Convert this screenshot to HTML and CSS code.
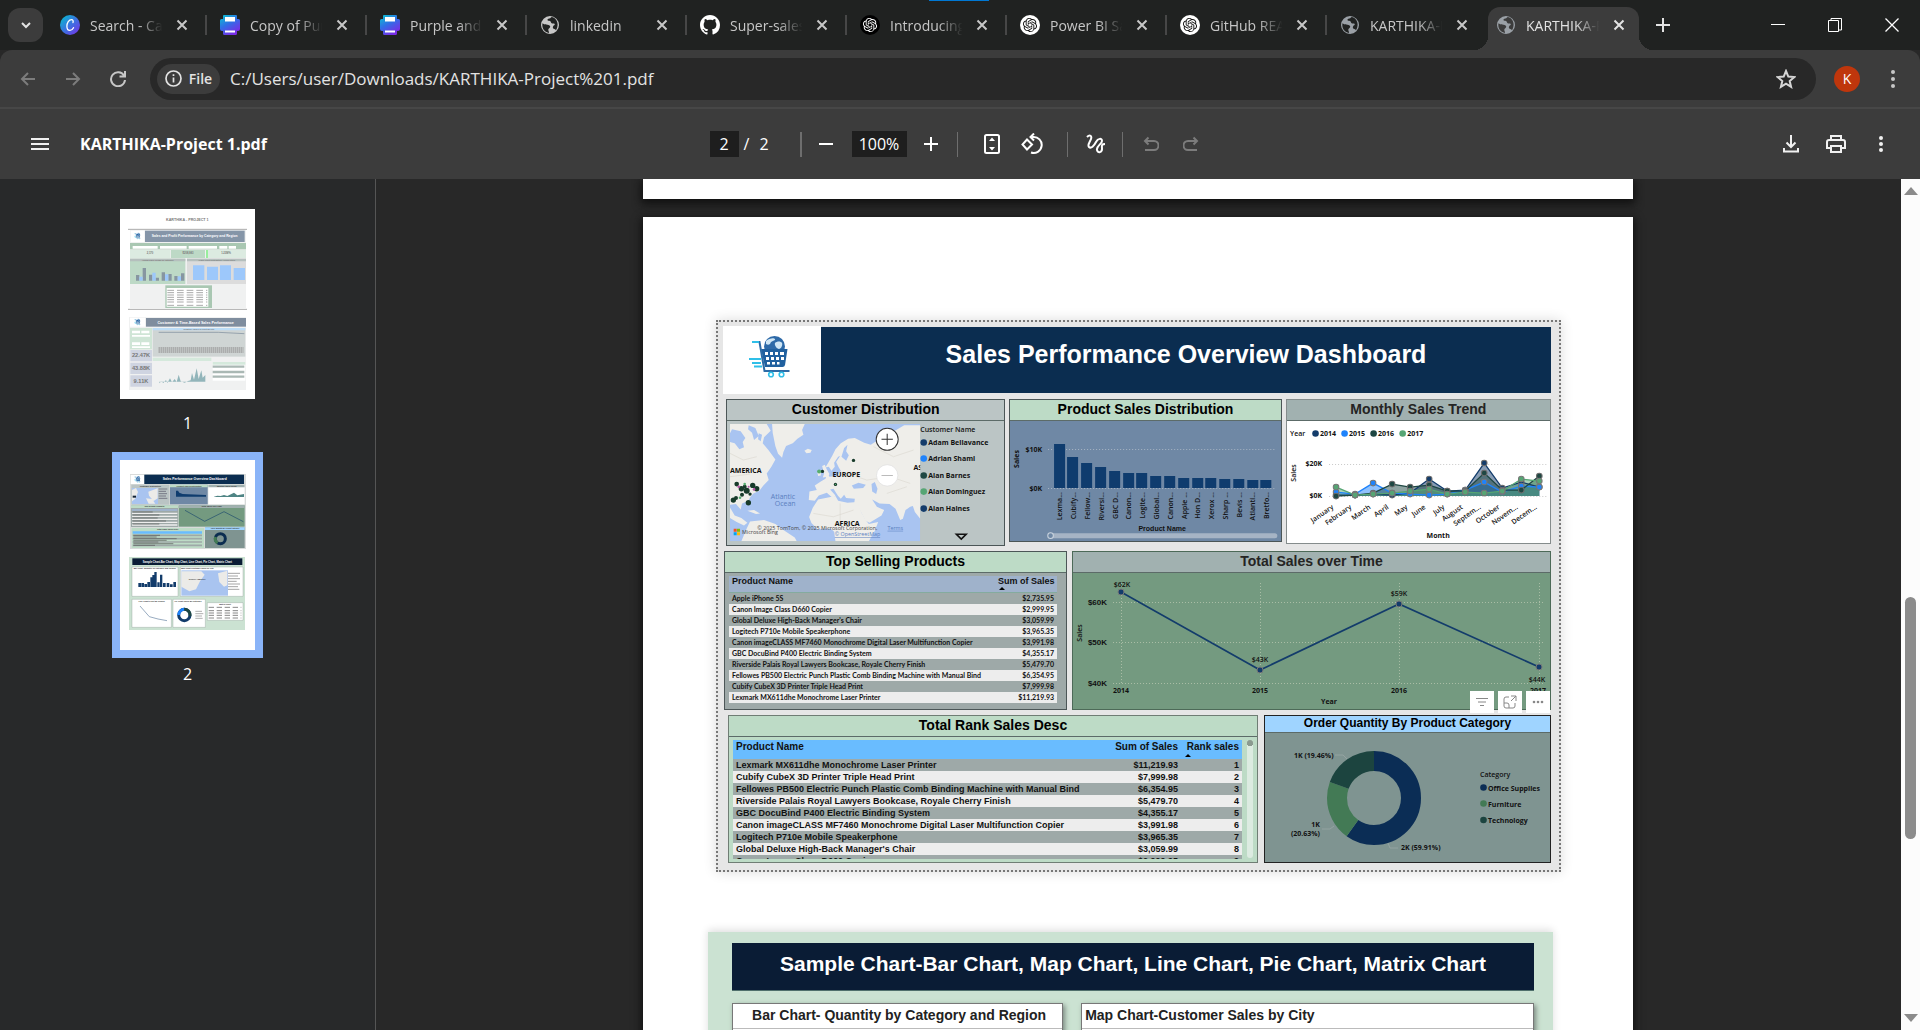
FILE: index.html
```html
<!DOCTYPE html>
<html lang="en">
<head>
<meta charset="utf-8">
<title>KARTHIKA-Project 1.pdf</title>
<link rel="stylesheet" href="styles.css">
</head>
<body>
<svg class="defs" width="0" height="0" aria-hidden="true">
  <defs>
    <linearGradient id="canva" x1="0" y1="0" x2="1" y2="1"><stop offset="0" stop-color="#00c4cc"/><stop offset=".5" stop-color="#3a73e0"/><stop offset="1" stop-color="#7d2ae8"/></linearGradient>
    <linearGradient id="print" x1="0" y1="0" x2=".6" y2="1"><stop offset="0" stop-color="#08c8cf"/><stop offset=".5" stop-color="#2f6fe6"/><stop offset="1" stop-color="#7a2be6"/></linearGradient>
    <symbol id="x" viewBox="0 0 16 16"><path d="M3.500 3.500l9 9M12.500 3.500l-9 9" stroke="currentColor" stroke-width="2" fill="none"/></symbol>
    <symbol id="i-canva" viewBox="0 0 20 20"><circle cx="10" cy="10" r="10" fill="url(#canva)"/><path d="M13 7.600c.5-1.600 0-3-1.500-3-2.500 0-4.600 3.400-4.600 6.600 0 2.600 1.300 4.200 3 4.200 1.500 0 2.800-1.100 3.600-2.700" fill="none" stroke="#fff" stroke-width="1.300" stroke-linecap="round"/></symbol>
    <symbol id="i-print" viewBox="0 0 20 20"><path d="M4 0h12a1 1 0 011 1v3h1.500A1.500 1.500 0 0120 5.500V14a2 2 0 01-2 2h-1v2.500a1.500 1.500 0 01-1.500 1.500h-11A1.500 1.500 0 013 18.500V16H2a2 2 0 01-2-2V5.500A1.500 1.500 0 011.500 4H3V1a1 1 0 011-1z" fill="url(#print)"/><path d="M5 2h10v4.500H5zM5 15.500h10v2H5z" fill="#fff"/></symbol>
    <symbol id="i-globe" viewBox="2 2 20 20"><path fill="currentColor" d="M12 3a9 9 0 100 18 9 9 0 000-18zm-1 16.900c-3.950-.49-6.700-3.800-6.700-7.900 0-.62.080-1.210.21-1.790 1.500 1.600 3.400.9 5 1.500 1.500.5 2.800.7 2.700 2.100-.1 1.400-1.700 1.500-1.900 2.700-.2 1.100.7 1.500.7 3.390zm6.900-2.700c-.7-.9-1.200-1.300-2.200-1.400-1.200-.2-.9-1.700-.4-2.700.4-.9 1.600-.7 1.500-1.800-.1-1-1.500-.6-2.600-.8-1.600-.2-1-2-2.200-2.500-1-.5-2.600 0-2.500-1.300.1-1.300 1.600-1 2.700-1.500.7-.3.900-.8 1.400-1.100 3.300.5 6 3.700 6 7.500 0 2.080-.5 4.200-1.700 5.600z"/></symbol>
    <symbol id="i-github" viewBox="0 0 16 16"><path fill="#fff" d="M8 0C3.580 0 0 3.580 0 8c0 3.540 2.290 6.530 5.470 7.590.4.070.55-.17.55-.38 0-.19-.01-.82-.01-1.490-2.010.37-2.530-.49-2.690-.94-.09-.23-.48-.94-.82-1.130-.28-.15-.68-.52-.01-.53.63-.01 1.080.58 1.230.82.72 1.210 1.870.87 2.330.66.070-.52.28-.87.510-1.070-1.780-.2-3.640-.89-3.640-3.950 0-.87.31-1.590.82-2.150-.08-.2-.36-1.020.08-2.120 0 0 .67-.21 2.200.82.640-.18 1.320-.27 2-.27s1.360.09 2 .27c1.530-1.040 2.200-.82 2.200-.82.440 1.100.16 1.920.08 2.120.51.56.82 1.270.82 2.150 0 3.070-1.870 3.750-3.650 3.950.29.25.54.73.54 1.480 0 1.070-.01 1.930-.01 2.200 0 .21.15.46.55.38A8.010 8.010 0 0016 8c0-4.420-3.580-8-8-8z"/></symbol>
    <path id="knot" d="M22.2819 9.8211a5.9847 5.9847 0 0 0-.5157-4.9108 6.0462 6.0462 0 0 0-6.5098-2.9A6.0651 6.0651 0 0 0 4.9807 4.1818a5.9847 5.9847 0 0 0-3.9977 2.9 6.0462 6.0462 0 0 0 .7427 7.0966 5.98 5.98 0 0 0 .511 4.9107 6.051 6.051 0 0 0 6.5146 2.9001A5.9847 5.9847 0 0 0 13.2599 24a6.0557 6.0557 0 0 0 5.7718-4.2058 5.9894 5.9894 0 0 0 3.9977-2.9001 6.0557 6.0557 0 0 0-.7475-7.0729zm-9.022 12.6081a4.4755 4.4755 0 0 1-2.8764-1.0408l.1419-.0804 4.7783-2.7582a.7948.7948 0 0 0 .3927-.6813v-6.7369l2.02 1.1686a.071.071 0 0 1 .038.052v5.5826a4.504 4.504 0 0 1-4.4945 4.4944zm-9.6607-4.1254a4.4708 4.4708 0 0 1-.5346-3.0137l.142.0852 4.783 2.7582a.7712.7712 0 0 0 .7806 0l5.8428-3.3685v2.3324a.0804.0804 0 0 1-.0332.0615L9.74 19.9502a4.4992 4.4992 0 0 1-6.1408-1.6464zM2.3408 7.8956a4.485 4.485 0 0 1 2.3655-1.9728V11.6a.7664.7664 0 0 0 .3879.6765l5.8144 3.3543-2.0201 1.1685a.0757.0757 0 0 1-.071 0l-4.8303-2.7865A4.504 4.504 0 0 1 2.3408 7.872zm16.5963 3.8558L13.1038 8.364 15.1192 7.2a.0757.0757 0 0 1 .071 0l4.8303 2.7913a4.4944 4.4944 0 0 1-.6765 8.1042v-5.6772a.79.79 0 0 0-.407-.667zm2.0107-3.0231l-.142-.0852-4.7735-2.7818a.7759.7759 0 0 0-.7854 0L9.409 9.2297V6.8974a.0662.0662 0 0 1 .0284-.0615l4.8303-2.7866a4.4992 4.4992 0 0 1 6.6802 4.66zM8.3065 12.863l-2.02-1.1638a.0804.0804 0 0 1-.038-.0567V6.0742a4.4992 4.4992 0 0 1 7.3757-3.4537l-.142.0805L8.704 5.459a.7948.7948 0 0 0-.3927.6813zm1.0976-2.3654l2.602-1.4998 2.6069 1.4998v2.9994l-2.5974 1.4997-2.6067-1.4997Z"/>
    <symbol id="i-ai-dark" viewBox="-5 -5 34 34"><circle cx="12" cy="12" r="17" fill="#000"/><use href="#knot" fill="#fff"/></symbol>
    <symbol id="i-ai" viewBox="-5 -5 34 34"><circle cx="12" cy="12" r="17" fill="#fff"/><use href="#knot" fill="#111"/></symbol>
    <symbol id="cart" viewBox="0 0 42 44">
      <circle cx="26.500" cy="11.500" r="10.500" fill="#2e6aa8"/><path d="M18 6c3-3 8-3.500 9-2s-4 2-4.500 4-3 2-4.500 1zM27 8c2-2 6-2 7 0s-1 6-3 6-5-4-4-6z" fill="#cfe6f5"/>
      <path d="M13 14h26.500L37 30q-.5 2-2.500 2H17z" fill="#20609f"/>
      <path d="M17 17h3v3h-3zM22 17h3v3h-3zM27 17h3v3h-3zM32 17h4v3h-4zM18 22h3v3h-3zM23 22h3v3h-3zM28 22h3v3h-3zM33 22h3v3h-3zM19 27h3v2.500h-3zM24 27h3v2.500h-3zM29 27h2.500v2.500H29z" fill="#fff"/>
      <path d="M4 7h7.500l5 29h25" fill="none" stroke="#2d6ba6" stroke-width="2"/><path d="M4 7h7M1 24h12M4 28h9M6 31.500h8" stroke="#2fbfe8" stroke-width="2"/>
      <circle cx="23" cy="39.500" r="2.300" fill="none" stroke="#2fbfe8" stroke-width="1.600"/><circle cx="33.500" cy="39.500" r="2.300" fill="none" stroke="#2fbfe8" stroke-width="1.600"/>
    </symbol>
  </defs>
</svg>

<header class="tabstrip">
  <span class="drag-mark"></span>
  <button class="tab-search" aria-label="Search tabs"><svg width="12" height="12" viewBox="0 0 12 12"><path d="M2 4l4 4 4-4" fill="none" stroke="currentColor" stroke-width="2"/></svg></button>
  <nav class="tabs" aria-label="Open tabs">
    <div class="tab"><svg class="fav"><use href="#i-canva"/></svg><a href="#">Search - Canva</a><button aria-label="Close tab"><svg><use href="#x"/></svg></button></div>
    <div class="tab"><svg class="fav"><use href="#i-print"/></svg><a href="#">Copy of Purple</a><button aria-label="Close tab"><svg><use href="#x"/></svg></button></div>
    <div class="tab"><svg class="fav"><use href="#i-print"/></svg><a href="#">Purple and White</a><button aria-label="Close tab"><svg><use href="#x"/></svg></button></div>
    <div class="tab"><svg class="fav"><use href="#i-globe"/></svg><a href="#">linkedin</a><button aria-label="Close tab"><svg><use href="#x"/></svg></button></div>
    <div class="tab"><svg class="fav"><use href="#i-github"/></svg><a href="#">Super-sales</a><button aria-label="Close tab"><svg><use href="#x"/></svg></button></div>
    <div class="tab"><svg class="fav"><use href="#i-ai-dark"/></svg><a href="#">Introducing</a><button aria-label="Close tab"><svg><use href="#x"/></svg></button></div>
    <div class="tab"><svg class="fav"><use href="#i-ai"/></svg><a href="#">Power BI Sales</a><button aria-label="Close tab"><svg><use href="#x"/></svg></button></div>
    <div class="tab"><svg class="fav"><use href="#i-ai"/></svg><a href="#">GitHub README</a><button aria-label="Close tab"><svg><use href="#x"/></svg></button></div>
    <div class="tab last"><svg class="fav grey"><use href="#i-globe"/></svg><a href="#">KARTHIKA-Project</a><button aria-label="Close tab"><svg><use href="#x"/></svg></button></div>
    <div class="tab active"><svg class="fav grey"><use href="#i-globe"/></svg><a href="#">KARTHIKA-Project</a><button aria-label="Close tab"><svg><use href="#x"/></svg></button></div>
    <button class="new-tab" aria-label="New tab"><svg width="14" height="14" viewBox="0 0 14 14"><path d="M7 0v14M0 7h14" stroke="currentColor" stroke-width="2"/></svg></button>
  </nav>
  <div class="window-buttons">
    <button aria-label="Minimize"><svg width="14" height="14" viewBox="0 0 14 14"><path d="M0 6.500h14" stroke="currentColor"/></svg></button>
    <button aria-label="Restore"><svg width="14" height="14" viewBox="0 0 14 14"><path d="M.5 2.500h10v11H.5zM3 2.500V.5h10.500V12h-3" fill="none" stroke="currentColor"/></svg></button>
    <button aria-label="Close"><svg width="14" height="14" viewBox="0 0 14 14"><path d="M.5.5l13 13M13.500.5l-13 13" stroke="currentColor" stroke-width="1.300"/></svg></button>
  </div>
</header>

<div class="navbar">
  <button class="nav dim" aria-label="Back"><svg width="16" height="16" viewBox="0 0 16 16"><path d="M15 8H2M8 2L2 8l6 6"/></svg></button>
  <button class="nav dim" aria-label="Forward"><svg width="16" height="16" viewBox="0 0 16 16"><path d="M1 8h13M8 2l6 6-6 6"/></svg></button>
  <button class="nav" aria-label="Reload"><svg width="16" height="16" viewBox="0 0 16 16"><path d="M14 4.500A7 7 0 1015 9M15 0v5.500H9.500" /></svg></button>
  <div class="omnibox">
    <button class="chip"><svg width="17" height="17" viewBox="0 0 17 17"><circle cx="8.500" cy="8.500" r="7.500" fill="none" stroke="currentColor" stroke-width="1.700"/><path d="M8.500 7.500v5M8.500 4.300v1.800" stroke="currentColor" stroke-width="1.700"/></svg>File</button>
    <input class="url" aria-label="Address" value="C:/Users/user/Downloads/KARTHIKA-Project%201.pdf">
    <button class="nav star" aria-label="Bookmark"><svg width="20" height="20" viewBox="0 0 20 20"><path d="M10 2l2.300 5.600 6 .5-4.600 3.900 1.400 5.900-5.100-3.200-5.100 3.200 1.400-5.900L1.700 8.100l6-.5z"/></svg></button>
  </div>
  <button class="avatar" aria-label="Profile">K</button>
  <button class="nav menu" aria-label="Menu"><svg width="6" height="20" viewBox="0 0 6 20"><g fill="currentColor" stroke="none"><circle cx="3" cy="3" r="2"/><circle cx="3" cy="10" r="2"/><circle cx="3" cy="17" r="2"/></g></svg></button>
</div>

<div class="pdfbar">
  <div class="pdf-left">
    <button aria-label="Toggle sidebar"><svg width="18" height="14" viewBox="0 0 18 14"><path d="M0 2h18M0 7h18M0 12h18"/></svg></button>
    <h1>KARTHIKA-Project 1.pdf</h1>
  </div>
  <div class="pdf-mid">
    <input class="pageno" aria-label="Page" value="2"><span class="of">/</span><span class="total">2</span>
    <i class="sep"></i>
    <button aria-label="Zoom out"><svg width="14" height="14" viewBox="0 0 14 14"><path d="M0 7h14"/></svg></button>
    <input class="zoom" aria-label="Zoom" value="100%">
    <button aria-label="Zoom in"><svg width="14" height="14" viewBox="0 0 14 14"><path d="M0 7h14M7 0v14"/></svg></button>
    <i class="sep thin"></i>
    <button class="fit" aria-label="Fit to page"><svg width="16" height="20" viewBox="0 0 16 20"><rect x="1" y="1" width="14" height="18" rx="1.500"/><path d="M8 3.500L11 7H5zM8 16.500L11 13H5z" fill="currentColor" stroke="none"/></svg></button>
    <button aria-label="Rotate"><svg width="22" height="22" viewBox="0 0 22 22"><path d="M6 6.500L11 11.500 6 16.500 1.500 11.500zM10 4h2a8 8 0 11-2 15.500M13 .5L9.500 4 13 7.500"/></svg></button>
    <i class="sep thin wide"></i>
    <button aria-label="Annotate"><svg width="20" height="20" viewBox="0 0 20 20"><path d="M1 3c3-3 5-1 4 2S1 11 3 13s5-1 7-5 6-4 6-1-6 5-5 9 5 2 5-1-1-5 3-5"/></svg></button>
    <i class="sep thin"></i>
    <button class="dim" aria-label="Undo"><svg width="16" height="16" viewBox="0 0 16 16"><path d="M2 14h9a4 4 0 000-9H2M5.500 1.500L2 5l3.500 3.500"/></svg></button>
    <button class="dim" aria-label="Redo"><svg width="16" height="16" viewBox="0 0 16 16"><path d="M14 14H5a4 4 0 010-9h9M10.500 1.500L14 5l-3.500 3.500"/></svg></button>
  </div>
  <div class="pdf-right">
    <button aria-label="Download"><svg width="16" height="18" viewBox="0 0 16 18"><path d="M8 0v12M3.500 7.500L8 12l4.500-4.500M1 13v3.500h14V13"/></svg></button>
    <button aria-label="Print"><svg width="20" height="18" viewBox="0 0 20 18"><path d="M5 5V1h10v4M5 13H1V7q0-2 2-2h14q2 0 2 2v6h-4M5 11h10v6H5z"/></svg></button>
    <button aria-label="More"><svg width="6" height="16" viewBox="0 0 6 16"><g fill="currentColor" stroke="none"><circle cx="3" cy="2" r="2"/><circle cx="3" cy="8" r="2"/><circle cx="3" cy="14" r="2"/></g></svg></button>
  </div>
</div>

<main class="viewer">
  <aside class="thumbs">
    <a class="thumb" href="#p1"><svg viewBox="90 57 405 570">
      <rect x="90" y="57" width="405" height="570" fill="#fff"/>
      <g class="mini">
      <text x="292" y="93" font-size="11">KARTHIKA - PROJECT 1</text>
      <path d="M114 118H471M114 358H471" stroke="#aaa" stroke-width="3"/><path d="M120 120h348v236H120zM117 381h351v219H117z" fill="#f0f1f1"/>
      <rect x="122" y="122" width="41" height="34" fill="#fff"/><use href="#cart" x="132" y="127" width="20" height="22"/><rect x="165" y="122" width="299" height="34" fill="#8595a8"/><text x="314" y="141" font-size="10" fill="#fff">Sales and Profit Performance by Category and Region</text>
      <rect x="120" y="159" width="348" height="19" fill="#a9c7b2"/><path d="M128 168h75v8h-75zM210 168h80v8h-80zM296 168h85v8h-85zM388 168h24v8h-24zM416 168h22v8h-22z" fill="#fff"/>
      <rect x="120" y="180" width="121" height="24" fill="#dcebe1"/><rect x="243" y="180" width="102" height="24" fill="#bdd9c6"/><rect x="348" y="180" width="120" height="24" fill="#dcebe1"/><path d="M348 180h6v24h-6z" fill="#98ee9d"/><text x="180" y="192" font-size="8">2,170</text><text x="294" y="192" font-size="8">$208,983</text><text x="408" y="192" font-size="8">1.23M%</text>
      <rect x="120" y="206" width="166" height="76" fill="#bdd9c6"/><rect x="291" y="206" width="177" height="76" fill="#dcdcdc"/><path d="M120 206h166v8H120zM291 206h177v8H291z" fill="#b5bfbd"/><text x="203" y="213" font-size="6">Annual Sales Trends by Category</text><text x="380" y="213" font-size="6">Yearly Profit Distribution Across Cities</text>
      <path d="M138 255h10v17h-10zM158 234h10v38h-10zM177 254h10v18h-10zM197 263h10v9h-10zM215 247h10v25h-10zM235 252h10v20h-10zM253 258h10v14h-10zM273 250h10v22h-10z" fill="#8796a1"/><path d="M148 260h10v12h-10zM187 248h10v24h-10zM225 253h10v19h-10zM263 259h10v13h-10zM309 226h34v44h-34zM351 230h33v40h-33zM390 226h33v44h-33zM431 234h34v36h-34z" fill="#9dc8fb"/>
      <rect x="226" y="286" width="140" height="68" fill="#a9c7b2"/><path d="M230 294h125v56H230z" fill="#fff"/><path d="M232 301h120M232 308h120M232 315h120M232 322h120M232 329h120M232 336h120M232 346h120" stroke="#aaa" stroke-width="3" stroke-dasharray="20 9"/>
      <rect x="120" y="383" width="45" height="27" fill="#fff"/><use href="#cart" x="132" y="385" width="20" height="22"/><rect x="168" y="384" width="300" height="26" fill="#7f8d9e"/><text x="317" y="402" font-size="11" fill="#fff">Customer &amp; Time-Based Sales Performance</text>
      <rect x="120" y="414" width="66" height="64" fill="#cfe5d6"/><path d="M126 422h24v8h-24zM154 422h24v8h-24zM126 435h54v5h-54zM126 457h24v8h-24zM154 457h24v8h-24zM126 469h54v5h-54z" fill="#fff"/>
      <rect x="188" y="414" width="278" height="86" fill="#cfd5d4"/><path d="M188 414h278v7H188z" fill="#bcdcf6"/><path d="M206 427h180l77 4" stroke="#79899a" fill="none" stroke-width="2"/><path d="M206 480h254" stroke="#999" stroke-width="18" stroke-dasharray="3 3"/><text x="327" y="420" font-size="6">Negative Values in Profit By City</text>
      <path d="M121 480h65v34h-65zM121 518h65v34h-65zM121 556h65v34h-65z" fill="#cfd4e1"/><text x="153" y="502" font-size="17">22.47K</text><text x="153" y="540" font-size="17">43.88K</text><text x="153" y="579" font-size="17">9.11K</text>
      <rect x="188" y="503" width="176" height="10" fill="#d5e9dc"/><path d="M208 580l6-6 6 5 8-9 4 9 8-14 6 12 8-10 6 9 6-22 6 20 12 4 10-5 8-2 4-22 6 20 8-34 6 32 8-26 4 22 8-8v20H208z" fill="#92b5ba"/>
      <rect x="368" y="516" width="98" height="56" fill="#fff"/><path d="M368 516h98v8h-98z" fill="#d5e9dc"/><path d="M368 530h95M368 546h95M368 560h95" stroke="#aab8b4" stroke-width="7"/>
      </g>
    </svg><span>1</span></a>
    <a class="thumb current" href="#p2"><svg viewBox="90 810 405 570">
      <rect x="90" y="810" width="405" height="570" fill="#fff"/>
      <g class="mini dark">
      <rect x="120" y="852" width="348" height="225" fill="#d8dbda"/><rect x="122" y="855" width="40" height="27" fill="#fff"/><use href="#cart" x="132" y="857" width="20" height="22"/><rect x="163" y="854" width="299" height="28" fill="#0b2d50"/><text x="314" y="870" font-size="10" fill="#fff">Sales Performance Overview Dashboard</text>
      <rect x="124" y="884" width="114" height="60" fill="#bac4c4"/><rect x="126" y="894" width="78" height="48" fill="#a9c4f0"/><path d="M126 900l12-6 6 12-8 20-10 8zM175 905l28-10v30l-12 8-14-16zM168 925l18 2 10 14h-20z" fill="#ecebe8"/><path d="M128 917h10v6h-10z" fill="#123"/><path d="M206 897h26M206 904h22M206 911h25M206 918h22M206 925h26" stroke="#556" stroke-width="2"/>
      <rect x="240" y="884" width="113" height="59" fill="#6f88a5"/><path d="M240 884h113v8H240z" fill="#bddbc6"/><path d="M258 902h6l4 6 10 4 70 3v5h-90z" fill="#0f3c6e"/><rect x="355" y="884" width="109" height="59" fill="#fff"/><path d="M355 884h109v8H355z" fill="#a1b1b0"/><path d="M372 920l10-3 10 1 10-3 10 3 20-10 10 8 20-4v9h-90z" fill="#4e8484"/>
      <text x="181" y="891" font-size="6">Customer Distribution</text><text x="297" y="891" font-size="6">Product Sales Distribution</text><text x="410" y="891" font-size="6">Monthly Sales Trend</text>
      <rect x="123" y="946" width="141" height="65" fill="#9ea9a8"/><path d="M123 946h141v8H123z" fill="#bddbc6"/><path d="M126 957h136v6H126z" fill="#9fb2cb"/><path d="M126 970h136M126 979h136M126 988h136M126 997h136M126 1005h136" stroke="#ededed" stroke-width="4"/><path d="M128 966h60M128 975h80M128 984h75M128 993h100M128 1002h80" stroke="#555" stroke-width="2"/><text x="193" y="952" font-size="6">Top Selling Products</text>
      <rect x="266" y="946" width="198" height="64" fill="#749a80"/><path d="M266 946h198v8H266z" fill="#a1b1b0"/><path d="M285 961l59 33 58-29 58 30" fill="none" stroke="#1c4a6d" stroke-width="2"/><text x="365" y="952" font-size="6">Total Sales over Time</text>
      <rect x="125" y="1014" width="217" height="60" fill="#bddbc6"/><path d="M128 1024h208v7H128z" fill="#69bcff"/><path d="M128 1036h208M128 1046h208M128 1056h208M128 1066h208" stroke="#9ea9a8" stroke-width="5"/><path d="M130 1036h80M130 1041h70M130 1046h130M130 1051h100M130 1056h75M130 1061h120M130 1066h65" stroke="#555" stroke-width="2"/><text x="233" y="1021" font-size="6">Total Rank Sales Desc</text>
      <rect x="345" y="1012" width="119" height="62" fill="#7f9491"/><path d="M345 1012h119v8H345z" fill="#9fd4ff"/><circle cx="391" cy="1046" r="15" fill="none" stroke="#0b2d50" stroke-width="9"/><path d="M383 1059a15 15 0 01-6-18" fill="none" stroke="#437a55" stroke-width="9"/><text x="405" y="1018" font-size="5">Order Quantity By Product Category</text>
      <rect x="117" y="1101" width="348" height="219" fill="#cbe2d2"/><rect x="127" y="1105" width="330" height="20" fill="#0a1c35"/><text x="292" y="1118" font-size="8" fill="#fff">Sample Chart-Bar Chart, Map Chart, Line Chart, Pie Chart, Matrix Chart</text>
      <path d="M126 1131h138v88H126zM271 1131h188v88H271zM126 1228h118v84H126zM249 1228h97v84h-97zM352 1238h107v53H352z" fill="#fff" stroke="#8a968e"/>
      <text x="194" y="1138" font-size="6">Bar Chart- Quantity by Category and Region</text><text x="322" y="1138" font-size="6">Map Chart-Customer Sales by City</text>
      <path d="M145 1179h8v12h-8zM154 1179h8v12h-8zM163 1182h8v9h-8zM172 1176h8v15h-8zM181 1162h6v29h-6zM187 1155h6v36h-6zM193 1146h7v45h-7zM202 1177h7v14h-7zM210 1154h7v37h-7zM219 1179h8v12h-8zM230 1179h8v12h-8zM240 1183h8v8h-8zM250 1176h8v15h-8z" fill="#133c6b"/>
      <rect x="274" y="1141" width="140" height="76" fill="#a9c4f0"/><path d="M274 1144h60l10 10-14 20-12 24-20 6-24-14zM384 1150l28-8v44l-10 4-14-14z" fill="#ecebe8"/><text x="322" y="1171" font-size="6">NORTH AMERICA</text><path d="M414 1150h36M414 1158h30M414 1166h36M414 1174h26M414 1182h36M414 1190h30M414 1198h34" stroke="#777" stroke-width="2"/>
      <path d="M150 1248l28 32 26 7 27 5" fill="none" stroke="#6480a0" stroke-width="2"/><circle cx="283" cy="1275" r="17" fill="none" stroke="#133c6b" stroke-width="9"/><path d="M283 1258a17 17 0 00-17 17" fill="none" stroke="#1f83fb" stroke-width="9"/><path d="M283 1258a17 17 0 0117 20" fill="none" stroke="#1e4743" stroke-width="9"/><path d="M316 1264h20M316 1271h24M316 1278h20M316 1285h22" stroke="#888" stroke-width="2"/>
      <text x="185" y="1236" font-size="6">Line Chart-Profit By Region</text><text x="294" y="1236" font-size="6">Pie Chart-Sales By Category</text><text x="405" y="1245" font-size="6">Matrix Chart</text><path d="M356 1252h98M356 1262h98M356 1269h98M356 1276h98M356 1284h98" stroke="#888" stroke-width="3" stroke-dasharray="16 8"/>
      </g>
    </svg><span>2</span></a>
  </aside>

  <div class="pages">
    <section class="sheet previous" id="p1"></section>
    <section class="sheet" id="p2">
      <div class="dash">
        <div class="dash-head"><div class="logo"><svg width="42" height="44"><use href="#cart"/></svg></div><h2>Sales Performance Overview Dashboard</h2></div>

        <div class="row three">
          <article class="panel map">
            <h3>Customer Distribution</h3>
            <svg class="chart" viewBox="727 421 277 124">
              <svg x="730" y="424" width="190" height="117" viewBox="90 372 570 351" overflow="hidden">
                <rect x="90" y="372" width="570" height="351" fill="#a9c4f1"/>
                <g fill="#efeeea">
                  <path d="M90 372H200L212 392 192 412 188 430 205 450 226 478 214 500 200 520 206 540 190 556 178 572 160 580 150 592 145 602 126 610 122 628 108 612 90 614Z"/>
                  <path d="M90 622L104 646 124 654 142 668 132 676 110 666 90 654Z"/>
                  <path d="M216 372h98l-8 18 4 14-18 12-14 14-20 8-8 18-4 17-12-12-8-22-8-40z"/><path d="M313 452l10-6 12 4-4 8-12 2z"/>
                  <path d="M366 498l8-4 6 14 8 14-4 8-16 2 4-12zM352 516l10-4v14l-8 2z"/>
                  <path d="M396 468l10-20 16-18 22-14 20-2 28 14 20 6 16-10 22-4 24-22 38-22h48v280l-16-20-6-18-8 2-14 10-8 26-8 4-14-34-18-14-30-2-22-12 14 22 22 10-8 16-36 22-12-6-24-46-10-4 2-16-26-2-6-10-10 12-8-8-14-22-10 2 16 18-8 8-18-16-24 8-12 16-18-2 2-26 22-4-6-14 18-12 14-8 6-16 6 10 22-2 12-16-6-10-8-16 12-18-6 2-12 18 2 12-10 12-8-12-10 2z"/>
                  <path d="M354 598l52-10 8 14 28 6 30-2 12 32 14 24 8 10 28-6-10 26-18 31H406l-4-28-10-10-40 2-18-18-7-18 11-28z"/>
                  <path d="M124 723L138 690 150 664 192 660 226 672 250 690 284 712 290 723Z"/><path d="M142 632l20-2 18 10-12 2z"/>
                </g>
                <path d="M96 388l26 6 14 20-8 12 4 16-14 6-14-18-14-4v-26zM146 376l20 8 10 24-14 12-6-22-12-10zM176 400l10 4-4 20-8-6z M455 556l20-8 22 6-8 10-28 2z M514 552l10-6 8 20-4 16-12-8z M424 470l8-26 10-10-4 20 8 12-8 16z" fill="#a9c4f1"/>
                <path d="M90 460l40 20 40-10M90 530l60-8M520 440l60 30 60-20M440 520l60 20 70-10 60 20M340 640l60 10 60-20M420 610v60M560 580l60-20" stroke="#dcd9d2" stroke-width="2" fill="none"/>
                <g fill="#173a2a"><circle cx="110" cy="552" r="7"/><circle cx="124" cy="566" r="8"/><circle cx="140" cy="572" r="9"/><circle cx="158" cy="556" r="8"/><circle cx="170" cy="566" r="8"/><circle cx="134" cy="560" r="6"/><circle cx="100" cy="600" r="8"/><circle cx="108" cy="594" r="6"/><circle cx="145" cy="608" r="8"/><circle cx="126" cy="584" r="6"/><circle cx="150" cy="582" r="5"/><circle cx="367" cy="514" r="5"/><circle cx="406" cy="553" r="5"/><circle cx="460" cy="481" r="5"/></g>
                <g fill="#56ad70"><circle cx="357" cy="514" r="6"/><circle cx="120" cy="593" r="4"/><circle cx="134" cy="552" r="4"/><circle cx="406" cy="553" r="2"/></g><g fill="#b457a3"><circle cx="116" cy="560" r="4"/><circle cx="162" cy="568" r="4"/><circle cx="146" cy="560" r="3"/></g>
                <g class="maplabel"><text x="90" y="519">AMERICA</text><text x="397" y="531">EUROPE</text><text x="404" y="678">AFRICA</text><text x="640" y="511">AS</text></g>
                <g class="sea"><text x="212" y="596">Atlantic</text><text x="224" y="619">Ocean</text></g>
                <path d="M101 686h9v9h-9z" fill="#f35325"/><path d="M111 686h9v9h-9z" fill="#81bc06"/><path d="M101 696h9v9h-9z" fill="#05a6f0"/><path d="M111 696h9v9h-9z" fill="#ffba08"/>
                <g class="credit"><text x="126" y="701">Microsoft Bing</text><text x="172" y="689">© 2025 TomTom, © 2025 Microsoft Corporation,</text><text x="562" y="689" class="lnk">Terms</text><text x="404" y="708" class="lnk">© OpenStreetMap</text></g>
                <circle cx="561" cy="418" r="33" fill="#fff" stroke="#333" stroke-width="3"/><path d="M544 418h34M561 401v34" stroke="#333" stroke-width="3"/><circle cx="561" cy="526" r="32" fill="#fff" stroke="#ddd" stroke-width="2"/><path d="M544 526h34" stroke="#bbb" stroke-width="3"/>
              </svg>
              <g class="legend"><text x="920" y="432" class="plain">Customer Name</text><text x="928" y="445">Adam Bellavance</text><text x="928" y="461">Adrian Shami</text><text x="928" y="478">Alan Barnes</text><text x="928" y="494">Alan Dominguez</text><text x="928" y="511">Alan Haines</text></g>
              <circle cx="923.500" cy="442.500" r="3.300" fill="#133c6b"/><circle cx="923.500" cy="458.500" r="3.300" fill="#1f83fb"/><circle cx="923.500" cy="475.500" r="3.300" fill="#1e4743"/><circle cx="923.500" cy="491.500" r="3.300" fill="#56a574"/><circle cx="923.500" cy="508.500" r="3.300" fill="#133c6b"/>
              <path d="M956 534h10l-5 5z" fill="none" stroke="#111" stroke-width="1.500"/>
            </svg>
          </article>

          <article class="panel bars">
            <h3>Product Sales Distribution</h3>
            <svg class="chart" viewBox="1011 421 270 120">
              <path d="M1049 449.500h228M1049 488.500h228" stroke="#a8b5c4" stroke-dasharray="1 2"/>
              <path fill="#0f3c6e" d="M1055 444h11v44h-11zM1068 457h11v31h-11zM1082 463h11v25h-11zM1096 467h11v21h-11zM1110 471h11v17h-11zM1124 473h11v15h-11zM1137 473h11v15h-11zM1151 476h11v12h-11zM1165 476h11v12h-11zM1179 478h11v10h-11zM1193 478h11v10h-11zM1206 478h11v10h-11zM1220 479h11v9h-11zM1234 479h11v9h-11zM1248 480h11v8h-11zM1261 480h11v8h-11z"/>
              <g class="axis end"><text x="1043" y="452">$10K</text><text x="1043" y="491">$0K</text></g>
              <g class="tick"><text transform="translate(1063 492) rotate(-90)">Lexma...</text><text transform="translate(1077 492) rotate(-90)">Cubify...</text><text transform="translate(1091 492) rotate(-90)">Fellow...</text><text transform="translate(1105 492) rotate(-90)">Riversi...</text><text transform="translate(1119 492) rotate(-90)">GBC D...</text><text transform="translate(1132 492) rotate(-90)">Canon...</text><text transform="translate(1146 492) rotate(-90)">Logite...</text><text transform="translate(1160 492) rotate(-90)">Global...</text><text transform="translate(1174 492) rotate(-90)">Canon...</text><text transform="translate(1188 492) rotate(-90)">Apple ...</text><text transform="translate(1201 492) rotate(-90)">Hon D...</text><text transform="translate(1215 492) rotate(-90)">Xerox ...</text><text transform="translate(1229 492) rotate(-90)">Sharp ...</text><text transform="translate(1243 492) rotate(-90)">Bevis ...</text><text transform="translate(1256 492) rotate(-90)">Atlanti...</text><text transform="translate(1270 492) rotate(-90)">Bretfo...</text></g>
              <text class="axis mid" transform="translate(1020 459) rotate(-90)">Sales</text><text class="axis mid arial" x="1163" y="531">Product Name</text>
              <rect x="1049" y="533" width="229" height="5" rx="2.500" fill="#a6b4c5"/><circle cx="1051.500" cy="535.500" r="2.800" fill="#6f88a5" stroke="#cbd5df"/>
            </svg>
          </article>

          <article class="panel trend">
            <h3>Monthly Sales Trend</h3>
            <svg class="chart" viewBox="1286 421 263 122">
              <g class="axis"><text x="1289" y="436" class="plain">Year</text><text x="1319" y="436">2014</text><text x="1348" y="436">2015</text><text x="1377" y="436">2016</text><text x="1406" y="436">2017</text></g>
              <circle cx="1314.500" cy="433.500" r="3.300" fill="#133c6b"/><circle cx="1343.500" cy="433.500" r="3.300" fill="#1f83fb"/><circle cx="1372.500" cy="433.500" r="3.300" fill="#1e4743"/><circle cx="1401.500" cy="433.500" r="3.300" fill="#56a574"/>
              <g class="axis end"><text x="1321" y="466">$20K</text><text x="1321" y="498">$0K</text></g>
              <path d="M1328 464.500h218M1328 496.500h218" stroke="#c9c9c9" stroke-dasharray="1 2"/>
              <g fill-opacity=".5">
                <path d="M1335 496l0-1 19 0 18-1 19 1 18-2 19-14 18 12 18-1 19-27 18 25 19-6 18 5v9z" fill="#133c6b"/><path d="M1335 496v-4l19 2 18-11 19 10 18 1 19 1 18-1 18-4 19-8 18 10 19-6 18 1v9z" fill="#1f83fb"/><path d="M1335 496l19-1 18-2 19-9 18 3 19-2 18 6h18l19-18 18 17h19l18-14v20z" fill="#1e4743"/><path d="M1335 496v-9l19 8 18-1 19-1 18-2 19-2 18 5 18-2 19 1 18-2 19-12 18 2v15z" fill="#56a574"/>
              </g>
              <g fill="none" stroke-width="1.300">
                <polyline class="s14" points="1335,495 1354,495 1372,494 1391,495 1409,493 1428,479 1446,491 1464,490 1483,463 1501,488 1520,482 1538,487"/><polyline class="s15" points="1335,492 1354,494 1372,483 1391,493 1409,494 1428,495 1446,494 1464,490 1483,482 1501,492 1520,486 1538,487"/><polyline class="s16" points="1335,496 1354,495 1372,493 1391,484 1409,487 1428,485 1446,491 1464,491 1483,473 1501,490 1520,490 1538,476"/><polyline class="s17" points="1335,487 1354,495 1372,494 1391,493 1409,491 1428,489 1446,494 1464,492 1483,493 1501,491 1520,479 1538,481"/>
              </g>
              <defs>
                <marker id="m14" markerUnits="userSpaceOnUse" markerWidth="8" markerHeight="8" refX="4" refY="4"><circle cx="4" cy="4" r="2.800" fill="#133c6b" stroke="#6b6b6b" stroke-width="1"/></marker>
                <marker id="m15" markerUnits="userSpaceOnUse" markerWidth="8" markerHeight="8" refX="4" refY="4"><circle cx="4" cy="4" r="2.800" fill="#1f83fb" stroke="#777" stroke-width="1"/></marker>
                <marker id="m16" markerUnits="userSpaceOnUse" markerWidth="8" markerHeight="8" refX="4" refY="4"><circle cx="4" cy="4" r="2.800" fill="#1e4743" stroke="#6b6b6b" stroke-width="1"/></marker>
                <marker id="m17" markerUnits="userSpaceOnUse" markerWidth="8" markerHeight="8" refX="4" refY="4"><circle cx="4" cy="4" r="2.800" fill="#56a574" stroke="#777" stroke-width="1"/></marker>
              </defs>
              <g class="month"><text transform="translate(1333 508) rotate(-35)">January</text><text transform="translate(1351 508) rotate(-35)">February</text><text transform="translate(1370 508) rotate(-35)">March</text><text transform="translate(1388 508) rotate(-35)">April</text><text transform="translate(1407 508) rotate(-35)">May</text><text transform="translate(1425 508) rotate(-35)">June</text><text transform="translate(1444 508) rotate(-35)">July</text><text transform="translate(1462 508) rotate(-35)">August</text><text transform="translate(1480 508) rotate(-35)">Septem...</text><text transform="translate(1499 508) rotate(-35)">October</text><text transform="translate(1517 508) rotate(-35)">Novem...</text><text transform="translate(1536 508) rotate(-35)">Decem...</text></g>
              <text class="axis mid" x="1437" y="538">Month</text><text class="axis mid plain" transform="translate(1295 473) rotate(-90)">Sales</text>
            </svg>
          </article>
        </div>

        <div class="row two">
          <article class="panel top">
            <h3>Top Selling Products</h3>
            <table>
              <thead><tr><th>Product Name</th><th class="num sorted">Sum of Sales</th></tr></thead>
              <tbody>
                <tr><td>Apple iPhone 5S</td><td>$2,735.95</td></tr>
                <tr><td>Canon Image Class D660 Copier</td><td>$2,999.95</td></tr>
                <tr><td>Global Deluxe High-Back Manager's Chair</td><td>$3,059.99</td></tr>
                <tr><td>Logitech P710e Mobile Speakerphone</td><td>$3,965.35</td></tr>
                <tr><td>Canon imageCLASS MF7460 Monochrome Digital Laser Multifunction Copier</td><td>$3,991.98</td></tr>
                <tr><td>GBC DocuBind P400 Electric Binding System</td><td>$4,355.17</td></tr>
                <tr><td>Riverside Palais Royal Lawyers Bookcase, Royale Cherry Finish</td><td>$5,479.70</td></tr>
                <tr><td>Fellowes PB500 Electric Punch Plastic Comb Binding Machine with Manual Bind</td><td>$6,354.95</td></tr>
                <tr><td>Cubify CubeX 3D Printer Triple Head Print</td><td>$7,999.98</td></tr>
                <tr><td>Lexmark MX611dhe Monochrome Laser Printer</td><td>$11,219.93</td></tr>
              </tbody>
            </table>
          </article>
          <article class="panel time">
            <h3>Total Sales over Time</h3>
            <svg class="chart" viewBox="1073 573 477 136">
              <path d="M1113 602.500h432M1113 642.500h432M1113 683.500h432M1121.500 583v100M1260.500 583v100M1399.500 583v100M1539.500 583v100" stroke="#a9bda5" stroke-dasharray="1 2"/>
              <path d="M1121 592l139 78 139-66 140 63" fill="none" stroke="#133c6b" stroke-width="1.600"/>
              <g fill="#133c6b" stroke="#777" stroke-width="1"><circle cx="1121" cy="592" r="3"/><circle cx="1260" cy="670" r="3"/><circle cx="1399" cy="604" r="3"/><circle cx="1539" cy="667" r="3"/></g>
              <g class="axis end arial big"><text x="1107" y="605">$60K</text><text x="1107" y="645">$50K</text><text x="1107" y="686">$40K</text></g>
              <g class="axis mid"><text x="1121" y="693">2014</text><text x="1260" y="693">2015</text><text x="1399" y="693">2016</text><text x="1538" y="693">2017</text><text x="1329" y="704">Year</text></g>
              <g class="axis mid plain"><text x="1122" y="587">$62K</text><text x="1260" y="662">$43K</text><text x="1399" y="596">$59K</text><text x="1537" y="682">$44K</text><text transform="translate(1082 633) rotate(-90)">Sales</text></g>
            </svg>
            <div class="tools">
              <button aria-label="Filters"><svg width="12" height="10" viewBox="0 0 12 10"><path d="M0 1.500h12M2 5h8M4 8.500h4"/></svg></button>
              <button aria-label="Focus mode"><svg width="14" height="14" viewBox="0 0 14 14"><path d="M8 1h5v5M13 1L8 6M6 2H3Q1 2 1 4v7q0 2 2 2h7q2 0 2-2V8M1 8h3q2 0 2 2v3"/></svg></button>
              <button aria-label="More options"><svg width="12" height="4" viewBox="0 0 12 4"><g fill="#888" stroke="none"><circle cx="2" cy="2" r="1.300"/><circle cx="6" cy="2" r="1.300"/><circle cx="10" cy="2" r="1.300"/></g></svg></button>
            </div>
          </article>
        </div>

        <div class="row rank-row">
          <article class="panel rank">
            <h3>Total Rank Sales Desc</h3>
            <div class="scroller">
              <table>
                <thead><tr><th>Product Name</th><th class="num">Sum of Sales</th><th class="num sorted">Rank sales</th></tr></thead>
                <tbody>
                  <tr><td>Lexmark MX611dhe Monochrome Laser Printer</td><td>$11,219.93</td><td>1</td></tr>
                  <tr><td>Cubify CubeX 3D Printer Triple Head Print</td><td>$7,999.98</td><td>2</td></tr>
                  <tr><td>Fellowes PB500 Electric Punch Plastic Comb Binding Machine with Manual Bind</td><td>$6,354.95</td><td>3</td></tr>
                  <tr><td>Riverside Palais Royal Lawyers Bookcase, Royale Cherry Finish</td><td>$5,479.70</td><td>4</td></tr>
                  <tr><td>GBC DocuBind P400 Electric Binding System</td><td>$4,355.17</td><td>5</td></tr>
                  <tr><td>Canon imageCLASS MF7460 Monochrome Digital Laser Multifunction Copier</td><td>$3,991.98</td><td>6</td></tr>
                  <tr><td>Logitech P710e Mobile Speakerphone</td><td>$3,965.35</td><td>7</td></tr>
                  <tr><td>Global Deluxe High-Back Manager's Chair</td><td>$3,059.99</td><td>8</td></tr>
                  <tr><td>Canon Image Class D660 Copier</td><td>$2,999.95</td><td>9</td></tr>
                </tbody>
              </table>
              <i class="track"></i>
            </div>
          </article>
          <article class="panel donut">
            <h3>Order Quantity By Product Category</h3>
            <svg class="chart" viewBox="1265 732 285 129">
              <g fill="none" stroke-width="20" transform="rotate(-90 1374 797)">
                <circle cx="1374" cy="797" r="37" pathLength="100" stroke="#0b2d55" stroke-dasharray="59.910 100"/><circle cx="1374" cy="797" r="37" pathLength="100" stroke="#437a55" stroke-dasharray="20.630 100" stroke-dashoffset="-59.910"/><circle cx="1374" cy="797" r="37" pathLength="100" stroke="#1c443f" stroke-dasharray="19.460 100" stroke-dashoffset="-80.540"/>
              </g>
              <path d="M1335 754h8l4 4M1322 828h8l4-3M1388 842l2 5h8" fill="none" stroke="#94a3a1"/>
              <g class="axis"><text x="1294" y="757">1K (19.46%)</text><text x="1401" y="849">2K (59.91%)</text></g><g class="axis end"><text x="1320" y="826">1K</text><text x="1320" y="835">(20.63%)</text></g>
              <g class="legend"><text x="1480" y="776" class="plain">Category</text><text x="1488" y="790">Office Supplies</text><text x="1488" y="806">Furniture</text><text x="1488" y="822">Technology</text></g>
              <circle cx="1483.500" cy="786.500" r="3.300" fill="#0b2d55"/><circle cx="1483.500" cy="802.500" r="3.300" fill="#437a55"/><circle cx="1483.500" cy="819" r="3.300" fill="#1c443f"/>
            </svg>
          </article>
        </div>
      </div>

      <div class="sample">
        <h2>Sample Chart-Bar Chart, Map Chart, Line Chart, Pie Chart, Matrix Chart</h2>
        <div class="cards"><article><h3>Bar Chart- Quantity by Category and Region</h3></article><article><h3>Map Chart-Customer Sales by City</h3></article></div>
      </div>
    </section>
  </div>

  <div class="scrollbar" aria-hidden="true"><i class="up"></i><i class="grip"></i><i class="down"></i></div>
</main>
</body>
</html>
```
FILE: styles.css
```css
* { box-sizing: border-box; }
body {
  margin: 0;
  height: 100vh;
  display: flex;
  flex-direction: column;
  overflow: hidden;
  background: #282828;
  color: #e3e3e3;
  font-family: "Open Sans", "Noto Sans", sans-serif;
  font-size: 14px;
}
button, input { font: inherit; color: inherit; background: none; border: 0; padding: 0; margin: 0; }
button { display: inline-flex; align-items: center; justify-content: center; }
a { color: inherit; text-decoration: none; }
h1, h2, h3 { margin: 0; }
svg { flex: none; }
.defs { position: absolute; }

/* Tab strip */
.tabstrip { position: relative; display: flex; height: 50px; flex: none; background: #202221; padding-left: 8px; }
.drag-mark { position: absolute; top: 0; left: 929px; width: 60px; height: 1px; background: #0078d4; }
.tab-search { width: 35px; height: 34px; margin-top: 8px; margin-right: 5px; border-radius: 12px; background: #3c3c3c; }
.tabs { display: flex; flex: 1; min-width: 0; }
.tab { position: relative; display: flex; align-items: center; flex: 0 1 160px; min-width: 0; padding: 0 18px 0 12px; color: #c7c7c7; }
.tab::after { content: ""; position: absolute; right: 1px; top: 15px; width: 2px; height: 20px; background: #474747; }
.tab .fav { width: 20px; height: 20px; margin-right: 10px; }
.tab .grey { color: #9aa0a6; }
.tab a { flex: 1; min-width: 0; overflow: hidden; white-space: nowrap; -webkit-mask-image: linear-gradient(90deg, #000 65%, transparent 98%); mask-image: linear-gradient(90deg, #000 65%, transparent 98%); }
.tab button { width: 16px; height: 16px; margin-left: 10px; }
.tab button svg { width: 16px; height: 16px; }
.tab.last::after { display: none; }
.tab.active { flex-basis: 151px; margin-top: 7px; padding: 0 12px 7px 8px; border-radius: 12px 12px 0 0; background: #3c3c3c; color: #e3e3e3; }
.tab.active::before, .tab.active::after { content: ""; position: absolute; top: auto; bottom: 0; width: 14px; height: 14px; }
.tab.active::before { left: -14px; background: radial-gradient(circle at 0 0, #202221 14px, #3c3c3c 14px); }
.tab.active::after { right: -14px; background: radial-gradient(circle at 100% 0, #202221 14px, #3c3c3c 14px); }
.new-tab { width: 48px; }
.window-buttons { display: flex; color: #fff; }
.window-buttons button { width: 57px; }

/* Address bar */
.navbar { display: flex; align-items: center; height: 59px; flex: none; background: #3c3c3c; border-bottom: 2px solid #474747; border-radius: 12px 12px 0 0; padding: 0 5px; }
.nav { width: 45px; height: 40px; color: #c7c7c7; }
.nav svg, .pdfbar svg { fill: none; stroke: currentColor; stroke-width: 2; }
.nav.dim { color: #7c7c7c; }
.omnibox { display: flex; align-items: center; flex: 1; height: 42px; margin: 0 18px 0 10px; padding: 0 8px 0 7px; border-radius: 21px; background: #282828; }
.chip { height: 30px; width: 63px; gap: 7px; border-radius: 15px; background: #3c3c3c; font-weight: 600; }
.url { flex: 1; min-width: 0; margin-left: 10px; font-size: 17px; outline: 0; }
.star { color: #d5d5d5; }
.star svg { stroke-width: 2; }
.avatar { width: 26px; height: 26px; border-radius: 50%; background: #bf360c; color: #fff; }
.menu { margin-left: 10px; }

/* Viewer toolbar */
.pdfbar { display: grid; grid-template-columns: 1fr auto 1fr; align-items: center; height: 70px; flex: none; background: #3c3c3c; color: #f1f1f1; }
.pdf-left { display: flex; align-items: center; padding-left: 31px; gap: 31px; }
.pdf-left h1 { font-size: 16px; font-weight: 700; color: #fff; }
.pdf-mid { display: flex; align-items: center; height: 26px; font-size: 16px; color: #fff; }
.pdf-mid button { width: 40px; }
.pdf-mid .dim { color: #7c7c7c; }
.pageno, .zoom { height: 26px; background: #1e1e1e; text-align: center; }
.pageno { width: 29px; }
.zoom { width: 55px; margin: 0 4px 0 6px; }
.of { margin-left: 5px; width: 16px; }
.total { width: 11px; margin: 0 29px 0 0; }
.sep { width: 2px; height: 25px; background: #6e6e6e; margin-right: 4px; }
.sep.thin { width: 1px; margin: 0 8px 0 6px; }
.sep.wide { margin-left: 15px; }
.pdf-mid .fit { margin-left: 6px; }
.pdf-right { display: flex; justify-content: flex-end; padding-right: 17px; }
.pdf-right button { width: 45px; height: 40px; }

/* Document area */
.viewer { display: flex; flex: 1; min-height: 0; background: #282828; }
.thumbs { width: 376px; flex: none; display: flex; flex-direction: column; align-items: center; background: #28292a; border-right: 1px solid #555; padding-top: 22px; overflow: hidden; }
.thumb { display: flex; flex-direction: column; align-items: center; width: 151px; }
.thumb svg { width: 100%; height: auto; border: 8px solid transparent; }
.thumb.current svg { border-color: #8ab4f8; }
.thumb span { height: 45px; padding-top: 4px; font-size: 16px; line-height: 24px; color: #fff; }
.mini text { font-family: "Liberation Sans", sans-serif; font-weight: 700; text-anchor: middle; fill: #777; }
.mini.dark text { fill: #333; }
.mini text[fill="#fff"] { fill: #fff; }
.pages { flex: 1; min-width: 0; overflow: hidden; display: flex; flex-direction: column; align-items: center; padding-right: 1px; }
.sheet { width: 100%; max-width: 990px; flex: none; margin-bottom: 18px; background: #fff; box-shadow: 0 3px 8px 2px #111; }
.sheet.previous { height: 20px; }
#p2 { padding: 103px 72px 100px 65px; color: #111; font-family: "Open Sans", sans-serif; }
.scrollbar { width: 19px; flex: none; display: grid; grid-template-rows: 24px 394fr 242fr 167fr 24px; justify-items: center; align-items: center; background: #fcfcfc; }
.scrollbar .up, .scrollbar .down { border: 7px solid transparent; border-top: 0; border-bottom: 8px solid #8b8b8b; }
.scrollbar .down { grid-row: 5; border-top: 8px solid #8b8b8b; border-bottom: 0; }
.scrollbar .grip { grid-row: 3; width: 11px; height: 100%; border-radius: 6px; background: #8b8b8b; }

/* Report page */
.dash { display: flex; flex-direction: column; gap: 5px; margin-left: 8px; height: 552px; padding: 4px 8px 8px 5px; border: 2px dotted #777; background: #e6e6e6; box-shadow: 0 0 12px #ddd; }
.dash-head { display: flex; height: 68px; }
.logo { width: 98px; background: #fff; padding: 9px 0 0 25px; }
.dash-head h2 { flex: 1; margin: 1px 0; background: #0b2d50; color: #fff; text-align: center; font: 700 25px/54px "Liberation Sans", sans-serif; }
.row { display: grid; align-items: start; }
.three { height: 147px; margin-left: 3px; gap: 4px; grid-template-columns: 279fr 272fr 265fr; }
.two { height: 159px; margin-left: 1px; gap: 5px; grid-template-columns: 343fr 479fr; }
.rank-row { height: 147px; margin-left: 5px; gap: 6px; grid-template-columns: 530fr 287fr; }
.panel { position: relative; border: 1px solid #4c5657; min-width: 0; }
.panel h3 { height: 21px; border-bottom: 1px solid #5c6b68; text-align: center; color: #000; font: 700 14px/19px "Liberation Sans", sans-serif; }
.chart { display: block; width: 100%; height: auto; }
.map { background: #bbc5c5; }
.bars { background: #6f88a5; }
.bars h3, .top h3, .rank h3 { background: #bddbc6; }
.trend { background: #fff; border-color: #858c8c; }
.trend h3, .time h3 { background: #a1b1b0; color: #252423; }
.time { background: #749a80; border-color: #4d6a58; }
.top, .rank { height: 100%; }
.top { background: #9ea9a8; }
.rank { background: #bddbc6; border-color: #6f7d74; }
.donut { background: #7f9491; border-color: #222; }
.panel.donut h3 { height: 17px; font-size: 12px; line-height: 14px; background: #9fd4ff; }

.chart text { font-size: 7px; font-weight: 600; fill: #111; }
.chart .axis text, .chart .axis, .chart .legend text { font-weight: 700; }
.chart .plain, .chart .plain text, .chart .legend .plain, .chart .axis .plain { font-weight: 600; }
.chart .big text { font-size: 8px; }
.arial, .arial text { font-family: "Liberation Sans", sans-serif; }
.end text, .tick text, .month text { text-anchor: end; }
.mid, .mid text { text-anchor: middle; }
.chart .maplabel text { font-size: 21px; font-weight: 700; }
.chart .sea text { font-size: 21px; font-weight: 400; fill: #5b7fc0; }
.chart .credit text { font-size: 16px; font-weight: 400; fill: #444; }
.chart .credit .lnk { fill: #5b7fc0; text-decoration: underline; }
.s14 { stroke: #133c6b; marker: url(#m14); }
.s15 { stroke: #1f83fb; marker: url(#m15); }
.s16 { stroke: #1e4743; marker: url(#m16); }
.s17 { stroke: #56a574; marker: url(#m17); }

table { border-collapse: collapse; table-layout: fixed; width: 100%; white-space: nowrap; color: #111; }
th, td { padding: 0 3px; text-align: left; }
th { position: relative; vertical-align: top; font-family: "Liberation Sans", sans-serif; }
.num, td:not(:first-child) { text-align: right; }
.sorted::after { content: ""; position: absolute; left: 4px; bottom: 2px; border: 3px solid transparent; border-top: 0; border-bottom-color: #000; }
.top table { width: 328px; margin: 3px 0 0 4px; font: 700 7px/11px Lato, sans-serif; }
.top th { height: 16px; font-size: 9px; line-height: 10px; background: #9fb2cb; border-bottom: 1px solid #84ab9f; }
.top th:last-child { width: 62px; }
.top td { height: 11px; }
.top tbody tr:nth-child(even), .rank tbody tr:nth-child(even) { background: #ededed; }
.scroller { display: flex; align-items: flex-start; gap: 5px; height: 122px; padding: 3px 4px 0; overflow: hidden; }
.rank table { flex: 1; font: 700 9px/12px "Liberation Sans", sans-serif; }
.rank th { height: 19px; font-size: 10px; line-height: 14px; background: #69bcff; }
.rank th:nth-child(2) { width: 72px; }
.rank th:nth-child(3) { width: 61px; }
.rank td { height: 12px; }
.rank tbody tr { background: #9ea9a8; }
.track { width: 6px; height: 118px; border-radius: 3px; background: radial-gradient(circle at 3px 3px, #8b9a90 3px, #dcebe1 3px); }
.tools { position: absolute; right: 0; bottom: -4px; display: flex; gap: 4px; }
.tools button { width: 24px; height: 22px; background: #fff; }
.tools svg { fill: none; stroke: #888; }

.sample { margin: 60px 8px 0 0; height: 400px; padding: 11px 19px 0 24px; background: #cbe2d2; box-shadow: 0 -2px 8px #ddd; }
.sample h2 { height: 48px; margin-bottom: 12px; border-bottom: 1px solid #50706c; background: #0a1c35; color: #fff; text-align: center; font: 700 21px/41px "Liberation Sans", sans-serif; }
.cards { display: grid; grid-template-columns: 332fr 454fr; gap: 18px; height: 320px; }
.cards article { background: #fff; border: 1px solid #777; box-shadow: 2px 2px 5px #7a877f; }
.cards h3 { height: 25px; border-bottom: 1px solid #bbb; padding-left: 3px; color: #222; font: 700 14px/22px "Liberation Sans", sans-serif; }
.cards article:first-child h3 { text-align: center; }
```
